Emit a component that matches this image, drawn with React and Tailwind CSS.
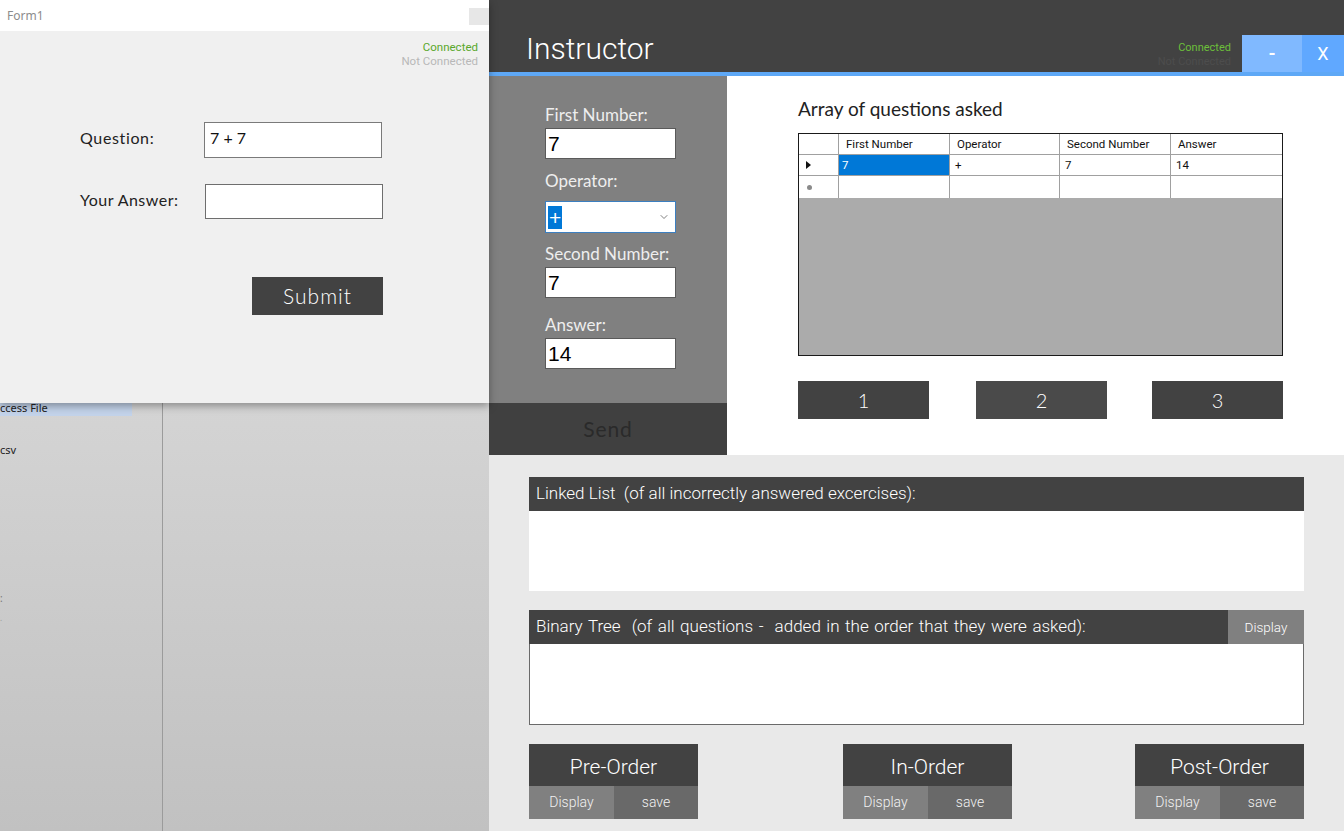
import { ChevronDown } from "lucide-react";

const gothic = { fontFamily: "Lato, 'Open Sans', sans-serif" };
const narrow = { fontFamily: "Roboto, 'Liberation Sans', sans-serif" };

function Form1() {
  return (
    <div className="relative z-10 h-[403px] shadow-[0_3px_8px_rgba(0,0,0,0.35)]">
      {/* title bar */}
      <div className="h-[31px] bg-white flex items-start justify-between pl-[7px]">
        <span className="text-[12px] leading-[31px] text-[#8c8c8c]" style={{ fontFamily: "'Noto Sans', sans-serif" }}>
          Form1
        </span>
        <div className="mt-[8px] w-[20px] h-[17px] bg-[#e7e7e7]" />
      </div>

      <div className="h-[372px] bg-[#f0f0f0] pt-[9px]">
        <div className="flex flex-col items-end pr-[11px] text-[11.5px] leading-[14px]" style={narrow}>
          <span className="text-[#5aa82c]">Connected</span>
          <span className="text-[#b8b8b8]">Not Connected</span>
        </div>

        <div className="pl-[80px] mt-[54px]" style={gothic}>
          <div className="flex items-center">
            <span className="w-[124px] text-[16px] text-[#222] tracking-[0.04em] pb-[4px]">Question:</span>
            <div className="w-[178px] h-[36px] border border-[#7a7a7a] bg-white flex items-center pl-[5px] pb-[4px] text-[16px] text-[#111]">
              7 + 7
            </div>
          </div>
          <div className="flex items-center mt-[26px]">
            <span className="w-[125px] text-[16px] text-[#222] tracking-[0.03em] pb-[4px]">Your Answer:</span>
            <div className="w-[178px] h-[35px] border border-[#6e6e6e] bg-white" />
          </div>
          <button className="ml-[172px] mt-[58px] w-[131px] h-[38px] bg-[#424242] text-white text-[21px] font-light tracking-[0.05em] flex items-center justify-center">
            Submit
          </button>
        </div>
      </div>
    </div>
  );
}

function Backdrop() {
  return (
    <div className="flex-1 flex bg-gradient-to-b from-[#d4d4d4] to-[#c1c1c1]" style={{ fontFamily: "'Noto Sans', sans-serif" }}>
      <div className="w-[163px] border-r border-[#9b9b9b] text-[11px] text-[#222]">
        <div className="w-[132px] h-[13px] bg-[#c3d3ea] leading-[9px]">ccess File</div>
        <div className="mt-[26px]">csv</div>
        <div className="mt-[133px] text-[10px] leading-[12px] text-[#777]">:</div>
        <div className="mt-[9px] text-[8px] leading-[10px] text-[#999]">.</div>
      </div>
      <div className="flex-1" />
    </div>
  );
}

function Field({ label, value, top }) {
  return (
    <div style={{ marginTop: top }}>
      <div className="text-[17px] leading-[20px] text-[#eeeeee]" style={gothic}>
        {label}
      </div>
      <div
        className="mt-[3px] w-[131px] h-[31px] border border-[#5a5a5a] bg-white flex items-center pl-[2px] text-[21px] text-black"
        style={{ fontFamily: "'Liberation Sans', Arial, sans-serif" }}
      >
        {value}
      </div>
    </div>
  );
}

function Grid() {
  const cols = ["w-[111px]", "w-[110px]", "w-[111px]", "flex-1"];
  const heads = ["First Number", "Operator", "Second Number", "Answer"];
  const vals = ["7", "+", "7", "14"];
  return (
    <div className="mt-[12px] w-[485px] h-[223px] border border-[#1a1a1a] bg-[#ababab] text-[11.5px] text-[#111]" style={narrow}>
      <div className="flex h-[21px] bg-white border-b border-[#a0a0a0]">
        <div className="w-[40px] border-r border-[#a0a0a0]" />
        {heads.map((h, i) => (
          <div key={h} className={`${cols[i]} ${i < 3 ? "border-r border-[#a0a0a0]" : ""} pl-[7px] leading-[20px]`}>
            {h}
          </div>
        ))}
      </div>
      <div className="flex h-[21px] bg-white border-b border-[#a0a0a0]">
        <div className="w-[40px] border-r border-[#a0a0a0] flex items-center pl-[7px]">
          <svg width="5" height="8" viewBox="0 0 5 8">
            <polygon points="0,0 5,4 0,8" fill="#111" />
          </svg>
        </div>
        {vals.map((v, i) => (
          <div
            key={i}
            className={`${cols[i]} ${i < 3 ? "border-r border-[#a0a0a0]" : ""} leading-[20px] ${
              i === 0 ? "bg-[#0078d7] text-white pl-[3px]" : "pl-[5px]"
            }`}
          >
            {v}
          </div>
        ))}
      </div>
      <div className="flex h-[22px] bg-white">
        <div className="w-[40px] border-r border-[#a0a0a0] flex items-center pl-[8px]">
          <span className="w-[5px] h-[5px] rounded-full bg-[#8a8a8a]" />
        </div>
        {cols.map((c, i) => (
          <div key={i} className={`${c} ${i < 3 ? "border-r border-[#a0a0a0]" : ""}`} />
        ))}
      </div>
    </div>
  );
}

function Traversal({ title }) {
  return (
    <div className="w-[169px]" style={narrow}>
      <div className="h-[42px] bg-[#424242] flex items-center justify-center pt-[5px] text-white text-[21px] font-light">
        {title}
      </div>
      <div className="flex h-[33px] text-[14px] text-[#f2f2f2] font-light">
        <div className="w-[85px] bg-[#808080] flex items-center justify-center">Display</div>
        <div className="flex-1 bg-[#696969] flex items-center justify-center">save</div>
      </div>
    </div>
  );
}

function Instructor() {
  return (
    <div className="w-[855px] flex flex-col">
      {/* header */}
      <div className="h-[72px] bg-[#424242] flex items-end">
        <div className="pl-[37px] pb-[6px] text-[30px] leading-[34px] text-white font-light flex-1" style={narrow}>
          Instructor
        </div>
        <div className="flex flex-col items-end pb-[3px] mr-[11px] text-[11px] leading-[14px]" style={narrow}>
          <span className="text-[#6cbf3a]">Connected</span>
          <span className="text-[#4d4d4d]">Not Connected</span>
        </div>
        <div className="w-[60px] h-[37px] bg-[#80b9ff] text-white text-[18px] font-bold flex items-center justify-center" style={narrow}>
          -
        </div>
        <div className="w-[42px] h-[37px] bg-[#60a8ff] text-white text-[18px] flex items-center justify-center" style={narrow}>
          X
        </div>
      </div>
      <div className="h-[4px] bg-[#5ea8f6]" />

      {/* middle */}
      <div className="h-[379px] flex">
        <div className="w-[238px] flex flex-col">
          <div className="flex-1 bg-[#808080] pl-[56px] pt-[29px]">
            <Field label="First Number:" value="7" top={0} />
            <div className="mt-[12px]">
              <div className="text-[17px] leading-[20px] text-[#eeeeee]" style={gothic}>
                Operator:
              </div>
              <div className="mt-[10px] w-[131px] h-[32px] border border-[#3c7fc0] bg-white flex items-center pl-[2px] pr-[5px]">
                <span
                  className="bg-[#0078d7] text-white text-[21px] leading-[23px] px-[1px]"
                  style={{ fontFamily: "'Liberation Sans', Arial, sans-serif" }}
                >
                  +
                </span>
                <ChevronDown size={12} strokeWidth={1.5} className="ml-auto text-[#555]" />
              </div>
            </div>
            <Field label="Second Number:" value="7" top={11} />
            <Field label="Answer:" value="14" top={17} />
          </div>
          <div className="h-[52px] bg-[#404040] flex items-center justify-center text-[21px] tracking-[0.04em] text-[#2a2a2a]" style={gothic}>
            Send
          </div>
        </div>

        <div className="flex-1 bg-white pl-[71px] pt-[21px]" style={gothic}>
          <div className="text-[19px] leading-[24px] text-[#222]">Array of questions asked</div>
          <Grid />
          <div className="mt-[25px] w-[485px] flex">
            <div className="w-[131px] h-[38px] bg-[#424242] text-white text-[20px] font-light flex items-center justify-center">1</div>
            <div className="ml-[47px] w-[131px] h-[38px] bg-[#4a4a4a] text-white text-[20px] font-light flex items-center justify-center">2</div>
            <div className="ml-[45px] w-[131px] h-[38px] bg-[#424242] text-white text-[20px] font-light flex items-center justify-center">3</div>
          </div>
        </div>
      </div>

      {/* bottom */}
      <div className="flex-1 bg-[#e9e9e9] px-[40px] pt-[22px]" style={narrow}>
        <div className="h-[34px] bg-[#424242] flex items-center pl-[7px] text-white text-[17px] font-light">
          Linked List&nbsp; (of all incorrectly answered excercises):
        </div>
        <div className="h-[80px] bg-white" />

        <div className="mt-[19px] h-[34px] bg-[#424242] flex items-stretch text-white">
          <div className="flex-1 flex items-center pl-[7px] text-[17px] font-light [word-spacing:1.4px]">
            Binary Tree&nbsp; (of all questions -&nbsp; added in the order that they were asked):
          </div>
          <div className="w-[76px] bg-[#808080] flex items-center justify-center text-[13.5px] font-light">Display</div>
        </div>
        <div className="h-[81px] bg-white border border-t-0 border-[#6a6a6a]" />

        <div className="mt-[19px] flex">
          <Traversal title="Pre-Order" />
          <div className="ml-[145px]">
            <Traversal title="In-Order" />
          </div>
          <div className="ml-[123px]">
            <Traversal title="Post-Order" />
          </div>
        </div>
      </div>
    </div>
  );
}

export default function App() {
  return (
    <div className="w-[1344px] h-[831px] flex overflow-hidden bg-[#c8c8c8]">
      <div className="w-[489px] flex flex-col">
        <Form1 />
        <Backdrop />
      </div>
      <Instructor />
    </div>
  );
}
